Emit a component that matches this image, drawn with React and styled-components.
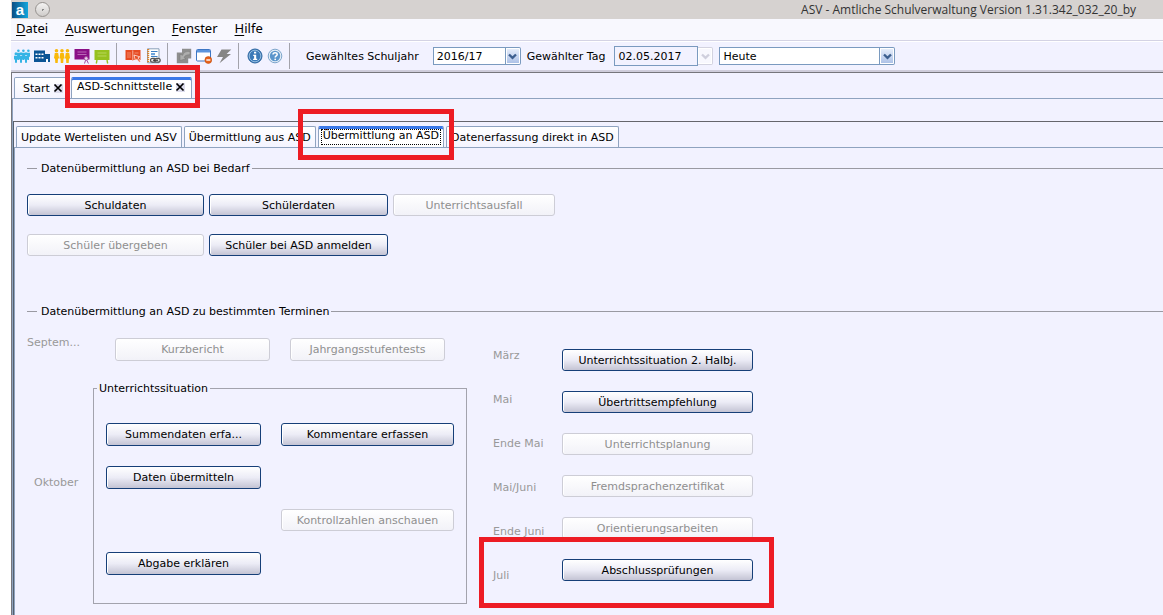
import React, { useState } from "react";
import styled, { createGlobalStyle } from "styled-components";

const termine = [
  { id: "maerz", monat: "März", text: "Unterrichtssituation 2. Halbj.", aktiv: true },
  { id: "mai", monat: "Mai", text: "Übertrittsempfehlung", aktiv: true },
  { id: "endemai", monat: "Ende Mai", text: "Unterrichtsplanung", aktiv: false },
  { id: "maijuni", monat: "Mai/Juni", text: "Fremdsprachenzertifikat", aktiv: false },
  { id: "endejuni", monat: "Ende Juni", text: "Orientierungsarbeiten", aktiv: false },
  { id: "juli", monat: "Juli", text: "Abschlussprüfungen", aktiv: true },
];

const menus = ["Datei", "Auswertungen", "Fenster", "Hilfe"];

const Icon = ({ children }) => (
  <svg width="16" height="16" viewBox="0 0 16 16" aria-hidden="true">
    {children}
  </svg>
);

const SchuelerIcon = () => (
  <Icon>
    <g fill="#35b4e5">
      {[4.4, 9.4, 14.4].map((x) => (
        <g key={x}>
          <circle cx={x} cy="2.8" r="1.3" />
          <path d={`M${x - 1.6} 4.8h3.200v4h-1v3.200h-1.400z`} />
        </g>
      ))}
      {[2, 7, 12].map((x) => (
        <g key={x}>
          <circle cx={x} cy="5.8" r="1.5" />
          <path d={`M${x - 2} 7.8h4v3.600h-1v3.400h-2v-3.400h-1z`} />
        </g>
      ))}
    </g>
  </Icon>
);

const SchuleIcon = () => (
  <Icon>
    <path d="M0 2.500h11v3.500h5v8H0z" fill="#0c5596" />
    <path
      d="M1.500 5.500h2v1.500h-2zM4.500 5.500h2v1.500h-2zM7.500 5.500h2v1.500h-2zM1.500 9h2v1.500h-2zM4.500 9h2v1.500h-2zM7.500 9h2v1.500h-2zM12 11h2v3h-2z"
      fill="#fff"
    />
  </Icon>
);

const KlassenIcon = () => (
  <Icon>
    <g fill="#f9b80a">
      {[2.5, 8, 13.5].map((x) => (
        <g key={x}>
          <circle cx={x} cy="2.7" r="1.8" />
          <path d={`M${x - 1.7} 5h3.400l.9 5.500h-1.100l-.3 4.500h-2.400l-.3-4.500h-1.100z`} />
        </g>
      ))}
    </g>
  </Icon>
);

const ZeugnisIcon = () => (
  <Icon>
    <path d="M.5 1h15v10.500H.5z" fill="#8a0f86" />
    <path d="M3.500 4h9M3.500 6.500h9" stroke="#b968b6" />
    <circle cx="12.200" cy="10.500" r="1.900" fill="#e9d0e8" stroke="#a24a9f" />
    <path d="M11.500 12.500l-1 3M13 12.500l1.400 3" stroke="#a24a9f" />
  </Icon>
);

const TafelIcon = () => (
  <Icon>
    <path d="M.5 2h15v10H.5z" fill="#97c11f" />
    <path d="M3.500 5h9M3.500 8h9" stroke="#b9d65c" />
    <path d="M3 12l-.7 3.500M13 12l.7 3.500" stroke="#97c11f" strokeWidth="1.400" />
  </Icon>
);

const BuchIcon = () => (
  <Icon>
    <path d="M.5 2H7l.8.6.8-.6H15.500v10H8.600l-.8.6-.8-.6H.5z" fill="#e64a22" />
    <path d="M2 5h4M2 7h4M2 9h4M9.500 5h4" stroke="#f59b80" strokeWidth="0.800" />
    <path d="M7.800 3v9" stroke="#fbd0c3" strokeWidth="0.800" />
    <path d="M9 7l5.800 1.800-1.900 1.100 2.600 3.300-1.200 1-2.600-3.300-1.300 1.700z" fill="#e64a22" stroke="#fff" strokeWidth="0.700" />
  </Icon>
);

const NotizIcon = () => (
  <Icon>
    <path d="M2.500.8h11.500v14H2.500z" fill="#fff" stroke="#8aa0ba" />
    <path d="M3.200 1v14" stroke="#d9822b" strokeWidth="2" strokeDasharray="1.300 0.700" />
    <path d="M6 3.500h6.500M6 8.500h6.500" stroke="#3d7fc4" />
    <path d="M6 5h4v2.200H6z" fill="#6fa6dc" />
    <rect x="5.500" y="10.300" width="5.500" height="3.800" rx="1.900" fill="#e4e4e4" stroke="#555" strokeWidth="1.200" />
    <rect x="9.700" y="10.300" width="5.500" height="3.800" rx="1.900" fill="#e4e4e4" stroke="#555" strokeWidth="1.200" />
    <path d="M8 12.200h5" stroke="#333" strokeWidth="1.200" />
  </Icon>
);

const ExportIcon = () => (
  <Icon>
    <path d="M6 .8h9.200v9.700h-3v4.700H.8V4.500H6z" fill="#8e8e8e" />
    <path d="M14 3.500c-4-.6-6.600 1-7.400 3.800L4 6.200v6.300l6-1.700-1.900-1.200c.7-2 2.500-3 5.900-2.800z" fill="#adadad" stroke="#777" strokeWidth="0.500" />
  </Icon>
);

const FensterIcon = () => (
  <Icon>
    <rect x="0.500" y="1.500" width="14" height="11.500" rx="1" fill="#fff" stroke="#3c76c4" />
    <path d="M1 2h13v2.500H1z" fill="#5c94dc" />
    <circle cx="12.300" cy="12" r="3.400" fill="#e8641b" stroke="#c04a0c" strokeWidth="0.600" />
    <path d="M10.300 12h4" stroke="#fff" strokeWidth="1.400" />
  </Icon>
);

const BlitzIcon = () => (
  <Icon>
    <path d="M5.500 1.500h9.800L10.600 6H15L3.500 15.200 7 9H1z" fill="#858585" />
  </Icon>
);

const InfoIcon = () => (
  <Icon>
    <circle cx="8" cy="8" r="7" fill="#3b7ab8" stroke="#2c659f" />
    <circle cx="8" cy="8" r="5.800" fill="none" stroke="#a9cbe8" strokeWidth="0.800" />
    <path d="M7 3.800h2.200v1.800H7zM6.200 6.800h3v4h1V12H6.100v-1.200h1V8h-.9z" fill="#fff" />
  </Icon>
);

const HilfeIcon = () => (
  <Icon>
    <circle cx="8" cy="8" r="6.800" fill="#e4eef7" stroke="#7ea6cb" />
    <circle cx="8" cy="8" r="5.200" fill="#5b96cc" />
    <path d="M6 6.600c0-2.600 4.200-2.400 4.200-.2C10.200 7.800 8.200 7.900 8.200 9.400" fill="none" stroke="#fff" strokeWidth="1.500" />
    <circle cx="8.200" cy="11.300" r="0.900" fill="#fff" />
  </Icon>
);

const toolGroups = [
  [
    ["Schüler", SchuelerIcon],
    ["Schule", SchuleIcon],
    ["Klassen", KlassenIcon],
    ["Zeugnisse", ZeugnisIcon],
    ["Unterricht", TafelIcon],
  ],
  [
    ["Wertelisten", BuchIcon],
    ["Berichte", NotizIcon],
  ],
  [
    ["Exportieren", ExportIcon],
    ["Fenster schließen", FensterIcon],
    ["Aktualisieren", BlitzIcon],
  ],
  [
    ["Info", InfoIcon],
    ["Hilfe", HilfeIcon],
  ],
];

const CloseIcon = () => (
  <svg width="10" height="10" viewBox="0 0 10 10" aria-hidden="true">
    <path d="M1 1h9v9H1z" fill="#dcdcec" />
    <path d="M1.500 1.500l7 7M8.500 1.500l-7 7" stroke="#000" strokeWidth="1.700" />
  </svg>
);

const Arrow = ({ off }) => (
  <ArrowBox $off={off} aria-hidden="true">
    <svg width="9" height="7" viewBox="0 0 9 7">
      <path d="M1 1.500l3.500 3.300L8 1.500" fill="none" stroke={off ? "#cfcfdd" : "#3d5f8f"} strokeWidth="2.400" />
    </svg>
  </ArrowBox>
);

export default function App() {
  const [jahr, setJahr] = useState("2016/17");
  const [zeitpunkt, setZeitpunkt] = useState("Heute");

  return (
    <Window>
      <GlobalStyle />
      <TitleBar>
        <Logo width="16" height="16" viewBox="0 0 16 16" aria-hidden="true">
          <defs>
            <linearGradient id="logo" x2="1">
              <stop offset="0" stopColor="#0b4f86" />
              <stop offset="1" stopColor="#12a5dc" />
            </linearGradient>
          </defs>
          <rect width="16" height="16" fill="url(#logo)" />
          <text x="8" y="13" textAnchor="middle">
            a
          </text>
        </Logo>
        <WindowDot />
        <Title>ASV - Amtliche Schulverwaltung Version 1.31.342_032_20_by</Title>
      </TitleBar>

      <MenuBar>
        {menus.map((m) => (
          <MenuButton key={m}>
            <u>{m[0]}</u>
            {m.slice(1)}
          </MenuButton>
        ))}
      </MenuBar>

      <Toolbar>
        {toolGroups.map((group, i) => (
          <ToolGroup key={i}>
            {group.map(([name, ToolIcon]) => (
              <ToolButton key={name} aria-label={name}>
                <ToolIcon />
              </ToolButton>
            ))}
          </ToolGroup>
        ))}
        <Filters>
          <label htmlFor="jahr">Gewähltes Schuljahr</label>
          <Combo>
            <Select id="jahr" $width={73} value={jahr} onChange={(e) => setJahr(e.target.value)}>
              <option>2016/17</option>
            </Select>
            <Arrow />
          </Combo>
          <label htmlFor="tag">Gewählter Tag</label>
          <Combo>
            <DateInput id="tag" value="02.05.2017" readOnly />
            <Arrow off />
          </Combo>
          <Combo>
            <Select
              aria-label="Zeitpunkt"
              $width={161}
              value={zeitpunkt}
              onChange={(e) => setZeitpunkt(e.target.value)}
            >
              <option>Heute</option>
            </Select>
            <Arrow />
          </Combo>
        </Filters>
      </Toolbar>

      <Workspace>
        <TabStrip role="tablist">
          <Tab role="tab" $padding="0 5px 0 8px">
            Start <CloseIcon />
          </Tab>
          <Tab role="tab" aria-selected="true" $active $padding="0 6px 3px 5px">
            ASD-Schnittstelle <CloseIcon />
            <TabMark />
          </Tab>
        </TabStrip>
        <Panel>
          <InnerFrame>
            <TabStrip role="tablist">
              <Tab role="tab">Update Wertelisten und ASV</Tab>
              <Tab role="tab">Übermittlung aus ASD</Tab>
              <Tab role="tab" aria-selected="true" $active $padding="0 2px">
                <Focus>Übermittlung an ASD</Focus>
                <TabMark $inner />
              </Tab>
              <Tab role="tab">Datenerfassung direkt in ASD</Tab>
            </TabStrip>
            <Content>
              <Section>
                <SectionLegend>Datenübermittlung an ASD bei Bedarf</SectionLegend>
                <DemandGrid>
                  <Button>Schuldaten</Button>
                  <Button>Schülerdaten</Button>
                  <Button disabled>Unterrichtsausfall</Button>
                  <Button disabled>Schüler übergeben</Button>
                  <Button>Schüler bei ASD anmelden</Button>
                </DemandGrid>
              </Section>

              <Section>
                <SectionLegend>Datenübermittlung an ASD zu bestimmten Terminen</SectionLegend>
                <Schedule>
                  <Autumn>
                    <Month>Septem...</Month>
                    <SeptemberRow>
                      <Button $tall disabled>Kurzbericht</Button>
                      <Button $tall disabled>Jahrgangsstufentests</Button>
                    </SeptemberRow>
                    <October>Oktober</October>
                    <Group>
                      <GroupLegend>Unterrichtssituation</GroupLegend>
                      <GroupGrid>
                        <Button $tall>Summendaten erfa...</Button>
                        <Button $tall>Kommentare erfassen</Button>
                        <Button $tall $column={1}>Daten übermitteln</Button>
                        <Button $column={2} disabled>Kontrollzahlen anschauen</Button>
                        <Button $tall $column={1}>Abgabe erklären</Button>
                      </GroupGrid>
                    </Group>
                  </Autumn>

                  <Summer>
                    <MonthColumn>
                      {termine.map((t) => (
                        <Month key={t.id} id={t.id}>
                          {t.monat}
                        </Month>
                      ))}
                    </MonthColumn>
                    <ButtonColumn>
                      {termine.map((t) => (
                        <Button key={t.id} aria-describedby={t.id} disabled={!t.aktiv}>
                          {t.text}
                        </Button>
                      ))}
                    </ButtonColumn>
                    <RowMark />
                  </Summer>
                </Schedule>
              </Section>
            </Content>
          </InnerFrame>
        </Panel>
      </Workspace>
    </Window>
  );
}

const GlobalStyle = createGlobalStyle`
  * {
    box-sizing: border-box;
  }
  body {
    margin: 0;
    background: #fff;
    color: #000;
    font: 11px/13px "DejaVu Sans", sans-serif;
  }
  button, input, select {
    font: inherit;
    color: inherit;
  }
`;

const Window = styled.div`
  display: flex;
  flex-direction: column;
  min-height: 100vh;
  margin-left: 11px;
`;

const TitleBar = styled.header`
  display: flex;
  align-items: center;
  gap: 7px;
  height: 19px;
  padding: 0 27px 0 1px;
  background: #d6d2d0;
`;

const Logo = styled.svg`
  overflow: visible;

  text {
    fill: #fff;
    font: bold 15px "Liberation Sans", sans-serif;
  }
`;

const WindowDot = styled.span`
  width: 15px;
  height: 15px;
  border: 1px solid #96928f;
  border-radius: 50%;
  background: radial-gradient(circle, #888 0 1px, transparent 1px), linear-gradient(#f4f3f2, #cfccca);
`;

const Title = styled.span`
  flex: 1;
  text-align: right;
  font: 12px/18px "Open Sans", sans-serif;
  color: #333;
`;

const MenuBar = styled.nav`
  display: flex;
  gap: 17px;
  height: 22px;
  padding-left: 5px;
  border-bottom: 1px solid #d4d3e4;
  background: #f8f8fe;
`;

const MenuButton = styled.button`
  padding: 0 0 2px;
  border: 0;
  background: none;
  font: 13px/19px "Noto Sans", sans-serif;

  u {
    text-underline-offset: 2px;
  }
`;

const Toolbar = styled.div`
  display: flex;
  align-items: center;
  height: 31px;
  border-top: 1px solid #fff;
  border-bottom: 2px solid #cfcddb;
  background: #f2f2ff;
`;

const ToolGroup = styled.div`
  display: flex;
  align-items: center;
  gap: 4px;
  height: 26px;
  padding: 0 6px 0 8px;
  border-right: 1px solid #a3a3ab;

  &:first-child {
    padding-left: 3px;
  }
`;

const ToolButton = styled.button`
  display: flex;
  padding: 0;
  border: 0;
  background: none;
`;

const Filters = styled.div`
  display: flex;
  align-items: center;
  gap: 6px;
  padding-left: 16px;

  label {
    margin-right: 3px;
  }
  label:first-child {
    margin-right: 8px;
  }
`;

const Combo = styled.span`
  display: flex;
  align-items: center;
`;

const Select = styled.select`
  appearance: none;
  width: ${(p) => p.$width}px;
  height: 18px;
  padding: 0 3px;
  border: 1px solid #7a9abf;
  border-radius: 0;
  background: #fff;
`;

const DateInput = styled.input`
  width: 84px;
  height: 20px;
  padding: 0 3px;
  border: 1px solid #7a9abf;
  background: #f2f2ff;
`;

const ArrowBox = styled.span`
  display: flex;
  align-items: center;
  justify-content: center;
  width: 15px;
  height: 18px;
  border: 1px solid ${(p) => (p.$off ? "#d3d3e0" : "#7a9abf")};
  border-left: 0;
  border-radius: 0 2px 2px 0;
  box-shadow: inset 0 0 0 1px #fff;
  background: ${(p) => (p.$off ? "#f8f8fe" : "linear-gradient(#eaf0fc, #a9bfe6)")};
`;

const Workspace = styled.main`
  flex: 1;
  display: flex;
  flex-direction: column;
  border-top: 1px solid #76767c;
  border-left: 1px solid #76767c;
  background: #f2f2ff;
`;

const TabStrip = styled.div`
  display: flex;
  align-items: flex-end;
  gap: 2px;
  height: 25px;
  padding-left: 2px;
`;

const Tab = styled.button`
  position: relative;
  display: flex;
  align-items: center;
  gap: 3px;
  height: 21px;
  padding: ${(p) => p.$padding || "0 4px"};
  border: 1px solid #8fa3c0;
  border-top-color: ${(p) => (p.$active ? "#3a78e8" : "#8fa3c0")};
  border-bottom: 0;
  border-radius: 2px 2px 0 0;
  background: ${(p) => (p.$active ? "#fff" : "linear-gradient(#fff, #f4f4ff)")};
  box-shadow: ${(p) => (p.$active ? "inset 0 2px #3a78e8" : "none")};
  white-space: nowrap;
`;

const Focus = styled.span`
  height: 16px;
  padding: 0 1px;
  border: 1px dotted #000;
  line-height: 12px;
`;

/* roter Rahmen um einen Reiter */
const TabMark = styled.span`
  position: absolute;
  z-index: 1;
  inset: ${(p) => (p.$inner ? "-18px -11px -13px -21px" : "-13px -9px -10px -7px")};
  border: 5px solid #ed1c24;
  pointer-events: none;
`;

const Panel = styled.div`
  flex: 1;
  display: flex;
  flex-direction: column;
  padding-top: 22px;
  border-top: 1px solid #8fa3bf;
  border-left: 1px solid #8fa3bf;
`;

const InnerFrame = styled.div`
  flex: 1;
  display: flex;
  flex-direction: column;
  border-top: 1px solid #66666c;
  border-left: 1px solid #55606c;
`;

const Content = styled.div`
  flex: 1;
  display: flex;
  flex-direction: column;
  gap: 49px;
  padding: 14px 0 0 12px;
  border-top: 1px solid #8fa3bf;
  border-left: 1px solid #8fa3bf;
`;

const Section = styled.fieldset`
  margin: 0;
  padding: 0;
  border: 0;
  border-top: 1px solid #9a9aa2;
`;

const SectionLegend = styled.legend`
  margin-left: 10px;
  padding: 0 2px 0 4px;
`;

const DemandGrid = styled.div`
  display: grid;
  grid-template-columns: 177px 179px 162px;
  gap: 18px 5px;
  padding-top: 19px;
`;

const Button = styled.button`
  height: ${(p) => (p.$tall ? 23 : 22)}px;
  padding: 0 4px;
  border: 1px solid #163f78;
  border-radius: 3px;
  background: linear-gradient(#fff, #ececf6 50%, #c4c4d4);
  box-shadow: inset 1px 0 #fff;
  white-space: nowrap;
  ${(p) => p.$column && `grid-column: ${p.$column};`}

  &:disabled {
    border-color: #cdcdd6;
    background: linear-gradient(#fff, #f2f2f8);
    color: #8f8f8f;
  }
`;

const Schedule = styled.div`
  display: flex;
  gap: 26px;
  padding-top: 18px;
`;

const Autumn = styled.div`
  display: grid;
  grid-template-columns: 66px 374px;
  grid-template-rows: 25px auto;
`;

const Month = styled.span`
  color: #999;
  white-space: nowrap;
`;

const October = styled(Month)`
  align-self: center;
  padding-left: 7px;
`;

const SeptemberRow = styled.div`
  display: grid;
  grid-template-columns: 155px 155px;
  gap: 20px;
  align-items: end;
  padding-left: 22px;
`;

const Group = styled.fieldset`
  min-width: 0;
  margin: 21px 0 0;
  padding: 28px 12px;
  border: 1px solid #a3a3ad;
`;

const GroupLegend = styled.legend`
  margin-left: -9px;
  padding: 0 2px;
`;

const GroupGrid = styled.div`
  display: grid;
  grid-template-columns: 155px 173px;
  grid-auto-rows: 23px;
  gap: 20px;

  /* "Kontrollzahlen" steht eine Zeile tiefer als "Daten übermitteln" */
  ${Button}:nth-child(4) {
    grid-row: 3;
  }
  ${Button}:nth-child(5) {
    grid-row: 4;
  }
`;

const Summer = styled.div`
  position: relative;
  display: grid;
  grid-template-columns: 69px 191px;
  align-self: flex-start;
  margin-top: 13px;
`;

const MonthColumn = styled.div`
  display: flex;
  flex-direction: column;
  gap: 31px;
`;

const ButtonColumn = styled.div`
  display: flex;
  flex-direction: column;
  gap: 20px;
`;

const RowMark = styled.span`
  position: absolute;
  left: -14px;
  right: -21px;
  bottom: -26px;
  height: 71px;
  border: 5px solid #ed1c24;
  pointer-events: none;
`;
